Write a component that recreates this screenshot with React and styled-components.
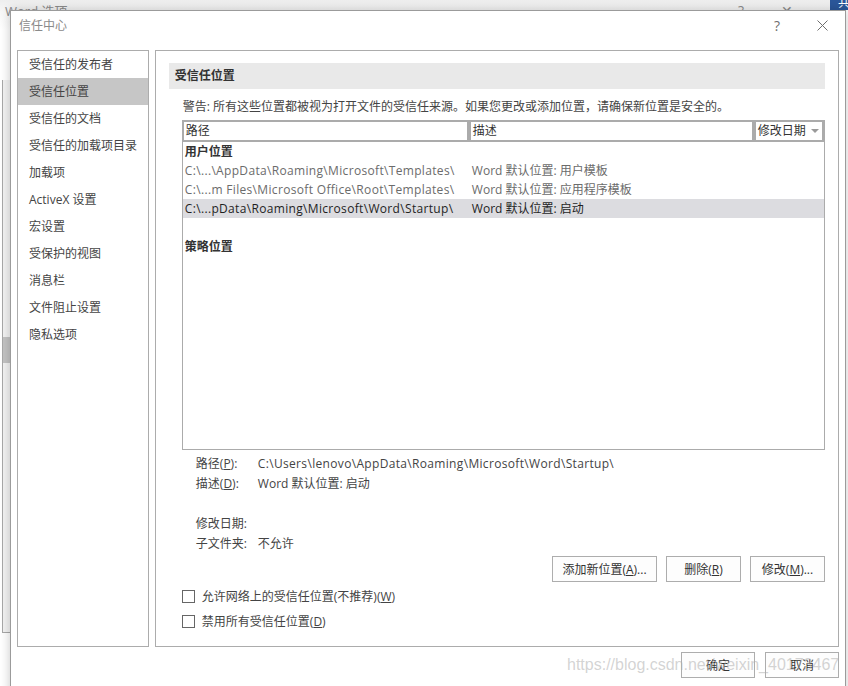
import React from 'react'
import styled, { createGlobalStyle } from 'styled-components'

const font = `"Open Sans", "Noto Sans CJK SC", sans-serif`

const GlobalStyle = createGlobalStyle`
  html, body { margin: 0; padding: 0; }
  body {
    width: 848px;
    height: 686px;
    overflow: hidden;
    font-family: ${font};
    font-size: 12px;
    background: #fff;
  }
`

const Desktop = styled.div`
  position: relative;
  width: 848px;
  height: 686px;
  overflow: hidden;
  background: #fff;
`

/* window behind the dialog */
const BackWindow = styled.div`
  position: absolute;
  left: 0;
  top: 0;
  width: 830px;
  height: 686px;
  background: linear-gradient(180deg, #eeeeee 0px, #f8f8f8 12px, #ffffff 30px);
  display: flex;
  flex-direction: column;
`

const BackTitle = styled.div`
  height: 20px;
  display: flex;
  align-items: center;
  padding: 0 20px 0 5px;
  color: #8c8c8c;
  font-size: 13px;
`

const BackTitleText = styled.span`
  flex: 1;
`

const BackCtrl = styled.span`
  width: 46px;
  text-align: center;
  color: #8c8c8c;
  font-size: 14px;
`

const BackBody = styled.div`
  flex: 1;
  display: flex;
`

const BackRail = styled.div`
  margin: 60px 0 0 2px;
  width: 10px;
  height: 552px;
  border-left: 1px solid #a8a8a8;
  border-bottom: 1px solid #a8a8a8;
  background: #f3f3f3;
  display: flex;
  flex-direction: column;
`

const BackThumb = styled.div`
  margin-top: 257px;
  height: 26px;
  background: #c4c4c4;
`

const Ribbon = styled.div`
  position: absolute;
  left: 830px;
  top: 0;
  width: 18px;
  height: 10px;
  background: #2b579a;
  color: #fff;
  font-size: 12px;
  line-height: 6px;
  overflow: hidden;
  padding-left: 8px;
  box-sizing: border-box;
`

/* trust center dialog */
const Dialog = styled.div`
  position: absolute;
  left: 10px;
  top: 10px;
  width: 836px;
  height: 690px;
  box-sizing: border-box;
  border: 1px solid #9b9b9b;
  background: #fff;
  box-shadow: 0 0 10px rgba(0, 0, 0, 0.22);
  display: flex;
  flex-direction: column;
`

const TitleBar = styled.div`
  height: 28px;
  display: flex;
  align-items: center;
  padding: 0 13px 0 8px;
`

const Title = styled.div`
  flex: 1;
  color: #8a8a8a;
  font-size: 12px;
`

const TitleBtn = styled.div`
  width: 20px;
  height: 20px;
  display: flex;
  align-items: center;
  justify-content: center;
  color: #6e6e6e;
  font-size: 14px;
  margin-left: ${p => p.$gap || 0}px;
`

const Body = styled.div`
  margin-top: 11px;
  display: flex;
  gap: 6px;
  padding: 0 6px;
`

const SideNav = styled.div`
  width: 132px;
  height: 597px;
  box-sizing: border-box;
  border: 1px solid #acacac;
  display: flex;
  flex-direction: column;
`

const NavItem = styled.div`
  height: 27px;
  line-height: 27px;
  padding-left: 11px;
  color: #444;
  background: ${p => (p.$active ? '#c6c6c6' : 'transparent')};
  white-space: nowrap;
`

const Panel = styled.div`
  width: 685px;
  height: 597px;
  box-sizing: border-box;
  border: 1px solid #acacac;
  padding: 12px 13px 0 13px;
  display: flex;
  flex-direction: column;
`

const Band = styled.div`
  height: 26px;
  line-height: 26px;
  background: #e9e9e9;
  padding-left: 6px;
  font-weight: bold;
  color: #333;
`

const Content = styled.div`
  padding-left: 13px;
  display: flex;
  flex-direction: column;
`

const Warning = styled.div`
  margin: 10px 0 0 1px;
  height: 16px;
  line-height: 16px;
  color: #444;
  white-space: nowrap;
`

const Table = styled.div`
  margin-top: 5px;
  height: 330px;
  box-sizing: border-box;
  border: 1px solid #ababab;
  display: flex;
  flex-direction: column;
`

const HeaderRow = styled.div`
  display: grid;
  grid-template-columns: 283px 281px 66px;
  column-gap: 4px;
  background: #ababab;
  padding: 1px 2px 2px 1px;
`

const HeaderCell = styled.div`
  height: 18px;
  line-height: 18px;
  background: #fff;
  padding-left: 2px;
  color: #333;
  display: flex;
  align-items: center;
  justify-content: space-between;
  white-space: nowrap;
`

const SortArrow = styled.span`
  width: 0;
  height: 0;
  margin-right: 3px;
  border-left: 4px solid transparent;
  border-right: 4px solid transparent;
  border-top: 4px solid #9a9a9a;
`

const Group = styled.div`
  & + & {
    margin-top: 19px;
  }
`

const GroupTitle = styled.div`
  height: 19px;
  line-height: 19px;
  padding-left: 2px;
  font-weight: bold;
  color: #333;
`

const Row = styled.div`
  display: grid;
  grid-template-columns: 287px 1fr;
  height: 19px;
  line-height: 19px;
  padding-left: 2px;
  white-space: nowrap;
  color: ${p => (p.$selected ? '#1f1f1f' : '#6b6b6b')};
  background: ${p => (p.$selected ? '#dcdce0' : 'transparent')};
`

const PathText = styled.span`
  letter-spacing: 0.33px;
`

const Details = styled.div`
  margin-top: 4px;
  padding-left: 14px;
  display: flex;
  flex-direction: column;
`

const DetailRow = styled.div`
  display: flex;
  height: 20px;
  line-height: 20px;
  color: #444;
  white-space: nowrap;
`

const DetailLabel = styled.span`
  width: 62px;
`

const ButtonRow = styled.div`
  margin-top: 2px;
  display: flex;
  justify-content: flex-end;
  gap: 9px;
`

const Button = styled.button`
  width: ${p => p.$w}px;
  height: 26px;
  padding: 0;
  box-sizing: border-box;
  border: 1px solid #adadad;
  background: #fdfdfd;
  color: #333;
  font-family: ${font};
  font-size: 12px;
`

const Checks = styled.div`
  margin-top: 4px;
  display: flex;
  flex-direction: column;
  gap: 5px;
`

const CheckRow = styled.label`
  display: flex;
  align-items: center;
  height: 20px;
  color: #444;
`

const Box = styled.span`
  width: 13px;
  height: 13px;
  box-sizing: border-box;
  border: 1px solid #666;
  background: #fff;
  margin-right: 7px;
`

const Footer = styled.div`
  margin-top: 5px;
  padding-right: 6px;
  display: flex;
  justify-content: flex-end;
  gap: 10px;
`

const Watermark = styled.div`
  position: absolute;
  left: 567px;
  top: 656px;
  font-family: "Liberation Sans", Arial, sans-serif;
  font-size: 16px;
  color: rgba(175, 175, 175, 0.55);
  pointer-events: none;
  white-space: nowrap;
`

const navItems = [
  '受信任的发布者',
  '受信任位置',
  '受信任的文档',
  '受信任的加载项目录',
  '加载项',
  'ActiveX 设置',
  '宏设置',
  '受保护的视图',
  '消息栏',
  '文件阻止设置',
  '隐私选项',
]

const groups = [
  {
    title: '用户位置',
    items: [
      { path: 'C:\\...\\AppData\\Roaming\\Microsoft\\Templates\\', desc: 'Word 默认位置: 用户模板' },
      { path: 'C:\\...m Files\\Microsoft Office\\Root\\Templates\\', desc: 'Word 默认位置: 应用程序模板' },
      { path: 'C:\\...pData\\Roaming\\Microsoft\\Word\\Startup\\', desc: 'Word 默认位置: 启动', selected: true },
    ],
  },
  { title: '策略位置', items: [] },
]

const CloseIcon = () => (
  <svg width="11" height="11" viewBox="0 0 11 11">
    <path d="M0.5 0.5 L10.5 10.5 M10.5 0.5 L0.5 10.5" stroke="#6e6e6e" strokeWidth="1" fill="none" />
  </svg>
)

const App = () => (
  <Desktop>
    <GlobalStyle />
    <BackWindow>
      <BackTitle>
        <BackTitleText>Word 选项</BackTitleText>
        <BackCtrl>?</BackCtrl>
        <BackCtrl>✕</BackCtrl>
      </BackTitle>
      <BackBody>
        <BackRail>
          <BackThumb />
        </BackRail>
      </BackBody>
    </BackWindow>
    <Ribbon>共</Ribbon>

    <Dialog>
      <TitleBar>
        <Title>信任中心</Title>
        <TitleBtn>?</TitleBtn>
        <TitleBtn $gap={25}><CloseIcon /></TitleBtn>
      </TitleBar>

      <Body>
        <SideNav>
          {navItems.map(item => (
            <NavItem key={item} $active={item === '受信任位置'}>{item}</NavItem>
          ))}
        </SideNav>

        <Panel>
          <Band>受信任位置</Band>
          <Content>
            <Warning>警告: 所有这些位置都被视为打开文件的受信任来源。如果您更改或添加位置，请确保新位置是安全的。</Warning>
            <Table>
              <HeaderRow>
                <HeaderCell>路径</HeaderCell>
                <HeaderCell>描述</HeaderCell>
                <HeaderCell>修改日期<SortArrow /></HeaderCell>
              </HeaderRow>
              {groups.map(g => (
                <Group key={g.title}>
                  <GroupTitle>{g.title}</GroupTitle>
                  {g.items.map(r => (
                    <Row key={r.path} $selected={r.selected}>
                      <PathText>{r.path}</PathText>
                      <span>{r.desc}</span>
                    </Row>
                  ))}
                </Group>
              ))}
            </Table>

            <Details>
              <DetailRow>
                <DetailLabel>路径(<u>P</u>):</DetailLabel>
                <PathText>C:\Users\lenovo\AppData\Roaming\Microsoft\Word\Startup\</PathText>
              </DetailRow>
              <DetailRow>
                <DetailLabel>描述(<u>D</u>):</DetailLabel>
                Word 默认位置: 启动
              </DetailRow>
              <DetailRow />
              <DetailRow>
                <DetailLabel>修改日期:</DetailLabel>
              </DetailRow>
              <DetailRow>
                <DetailLabel>子文件夹:</DetailLabel>
                不允许
              </DetailRow>
            </Details>

            <ButtonRow>
              <Button $w={105}>添加新位置(<u>A</u>)...</Button>
              <Button $w={75}>删除(<u>R</u>)</Button>
              <Button $w={75}>修改(<u>M</u>)...</Button>
            </ButtonRow>

            <Checks>
              <CheckRow><Box />允许网络上的受信任位置(不推荐)(<u>W</u>)</CheckRow>
              <CheckRow><Box />禁用所有受信任位置(<u>D</u>)</CheckRow>
            </Checks>
          </Content>
        </Panel>
      </Body>

      <Footer>
        <Button $w={74}>确定</Button>
        <Button $w={74}>取消</Button>
      </Footer>
    </Dialog>

    <Watermark>https://blog.csdn.net/weixin_40173467</Watermark>
  </Desktop>
)

export default App
